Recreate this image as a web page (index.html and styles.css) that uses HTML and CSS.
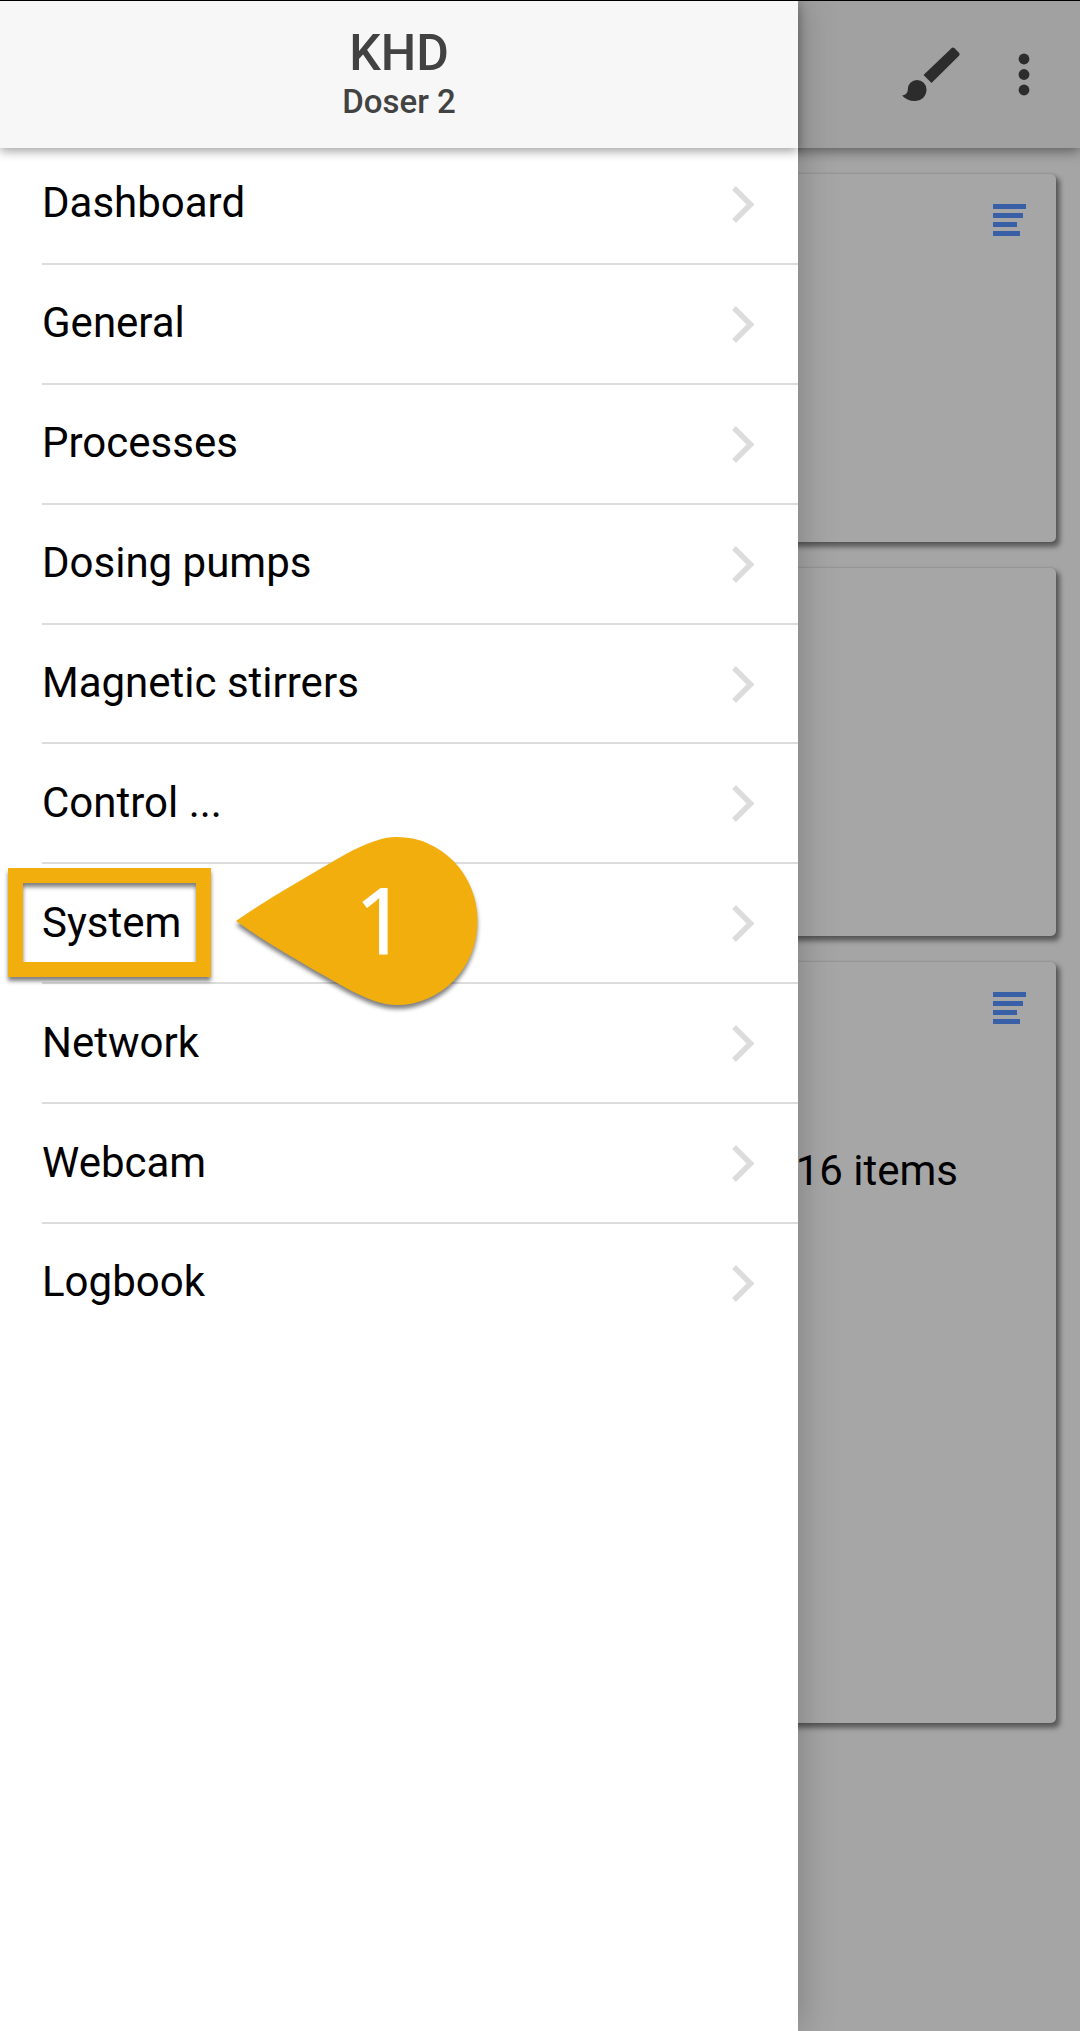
FILE: index.html
```html
<!DOCTYPE html>
<html lang="en">
<head>
  <meta charset="UTF-8" />
  <meta name="viewport" content="width=device-width, initial-scale=1" />
  <title>KHD Doser 2</title>
  <link rel="stylesheet" href="styles.css">
</head>
<body>
  <div class="page">
    <header class="toolbar">
      <svg class="brush" viewBox="0 0 58 55"><path d="M49.5 1.2Q51 -.1 52.5 1.2L57 5.8Q58.2 7.3 57 8.8L29.5 36L21.5 28Z"/><path d="M0 48.5C4 48 5.8 45.5 5.8 42.5A9.2 9.2 0 0 1 15 33A9.6 9.6 0 0 1 24.5 42.5C24.5 49.5 19.2 54 12.5 54C7.5 54 3 52 0 48.5Z"/></svg>
      <svg class="more" viewBox="0 0 12 44"><circle cx="6" cy="6" r="5.4"/><circle cx="6" cy="21.5" r="5.4"/><circle cx="6" cy="37" r="5.4"/></svg>
    </header>
    <main class="cards">
      <section class="card">
        <svg class="lines" viewBox="0 0 33 32"><path d="M0 0H33V5H0ZM0 9H30V14H0ZM0 18H24V23H0ZM0 27H27V32H0Z"/></svg>
      </section>
      <section class="card"></section>
      <section class="card card-tall">
        <svg class="lines" viewBox="0 0 33 32"><path d="M0 0H33V5H0ZM0 9H30V14H0ZM0 18H24V23H0ZM0 27H27V32H0Z"/></svg>
        <p class="count">16 items</p>
      </section>
    </main>
  </div>

  <aside class="drawer">
    <header class="drawer-head">
      <h1>KHD</h1>
      <h2>Doser 2</h2>
    </header>
    <nav class="menu">
      <a class="item">Dashboard<svg class="chevron" viewBox="0 0 22 37"><path d="M2 2L18.5 18.5L2 35"/></svg></a>
      <a class="item">General<svg class="chevron" viewBox="0 0 22 37"><path d="M2 2L18.5 18.5L2 35"/></svg></a>
      <a class="item">Processes<svg class="chevron" viewBox="0 0 22 37"><path d="M2 2L18.5 18.5L2 35"/></svg></a>
      <a class="item">Dosing pumps<svg class="chevron" viewBox="0 0 22 37"><path d="M2 2L18.5 18.5L2 35"/></svg></a>
      <a class="item">Magnetic stirrers<svg class="chevron" viewBox="0 0 22 37"><path d="M2 2L18.5 18.5L2 35"/></svg></a>
      <a class="item">Control ...<svg class="chevron" viewBox="0 0 22 37"><path d="M2 2L18.5 18.5L2 35"/></svg></a>
      <a class="item">System<svg class="chevron" viewBox="0 0 22 37"><path d="M2 2L18.5 18.5L2 35"/></svg></a>
      <a class="item">Network<svg class="chevron" viewBox="0 0 22 37"><path d="M2 2L18.5 18.5L2 35"/></svg></a>
      <a class="item">Webcam<svg class="chevron" viewBox="0 0 22 37"><path d="M2 2L18.5 18.5L2 35"/></svg></a>
      <a class="item">Logbook<svg class="chevron" viewBox="0 0 22 37"><path d="M2 2L18.5 18.5L2 35"/></svg></a>
    </nav>
  </aside>

  <!-- step marker on "System" -->
  <div class="highlight"></div>
  <div class="callout">
    <svg viewBox="0 0 242 168"><path d="M0 84C35 60 77 36 110 17C131 6 146 0 161 0A80.5 84 0 0 1 161 168C146 168 131 162 110 151C77 132 35 109 0 84Z"/></svg>
    <span>1</span>
  </div>
</body>
</html>
```

FILE: styles.css
```css
*{box-sizing:border-box;}
body,html{margin:0;padding:0;height:100%;font-family:Roboto,sans-serif;}
body{position:relative;overflow:hidden;background:#a5a5a5;border-top:1px solid #000;color:#000;}
h1,h2,p{margin:0;}

.page{height:100%;}
.toolbar{height:147px;background:#a1a1a1;display:flex;justify-content:flex-end;align-items:flex-start;padding:46px 50px 0 0;box-shadow:0 3px 12px rgba(0,0,0,.45);}
.brush{width:58px;height:55px;fill:#2c2c2c;margin-right:58px;}
.more{width:12px;height:44px;fill:#2c2c2c;margin-top:6px;}
.cards{display:flex;flex-direction:column;gap:26px;padding:26px 24px 0;}
.card{height:368px;background:#a6a6a6;border-radius:5px;box-shadow:3px 4px 5px 1px rgba(0,0,0,.45),0 0 2px rgba(0,0,0,.2);display:flex;flex-direction:column;align-items:flex-end;padding:30px 30px 0 0;}
.card-tall{height:761px;}
.lines{width:33px;height:32px;fill:#3960a6;}
.count{font-size:42px;line-height:50px;margin:122px 68px 0 0;}

.drawer{position:absolute;top:0;left:0;width:798px;height:100%;background:#fff;box-shadow:0 0 36px rgba(0,0,0,.26);}
.drawer-head{height:147px;background:#f7f7f7;color:#424242;text-align:center;padding-top:22px;box-shadow:0 3px 10px rgba(0,0,0,.38);}
h1{font-size:50px;line-height:60px;font-weight:500;}
h2{font-size:33px;line-height:38px;font-weight:500;}
.menu{padding-left:42px;margin-top:-3px;}
.item{height:119.9px;display:flex;justify-content:space-between;align-items:center;padding:0 44px 2px 0;border-bottom:2px solid #dcdcdc;font-size:42px;}
.item:last-child{border-color:transparent;}
.chevron{width:22px;height:37px;fill:none;stroke:#dcdcdc;stroke-width:5.5;margin-top:3px;}

.highlight{position:absolute;left:8px;top:867px;width:203px;height:109px;border:15px solid #f2ae0c;filter:drop-shadow(0 4px 2px rgba(0,0,0,.5));}
.callout{position:absolute;left:236px;top:836px;width:242px;height:168px;}
.callout svg{display:block;width:242px;height:168px;fill:#f2ae0c;filter:drop-shadow(0 4px 2px rgba(0,0,0,.5));}
.callout span{position:absolute;left:119px;top:27px;width:52px;text-align:center;color:#fff;font-family:"Open Sans",sans-serif;font-size:91px;line-height:110px;-webkit-text-stroke:1.2px #fff;}
```
